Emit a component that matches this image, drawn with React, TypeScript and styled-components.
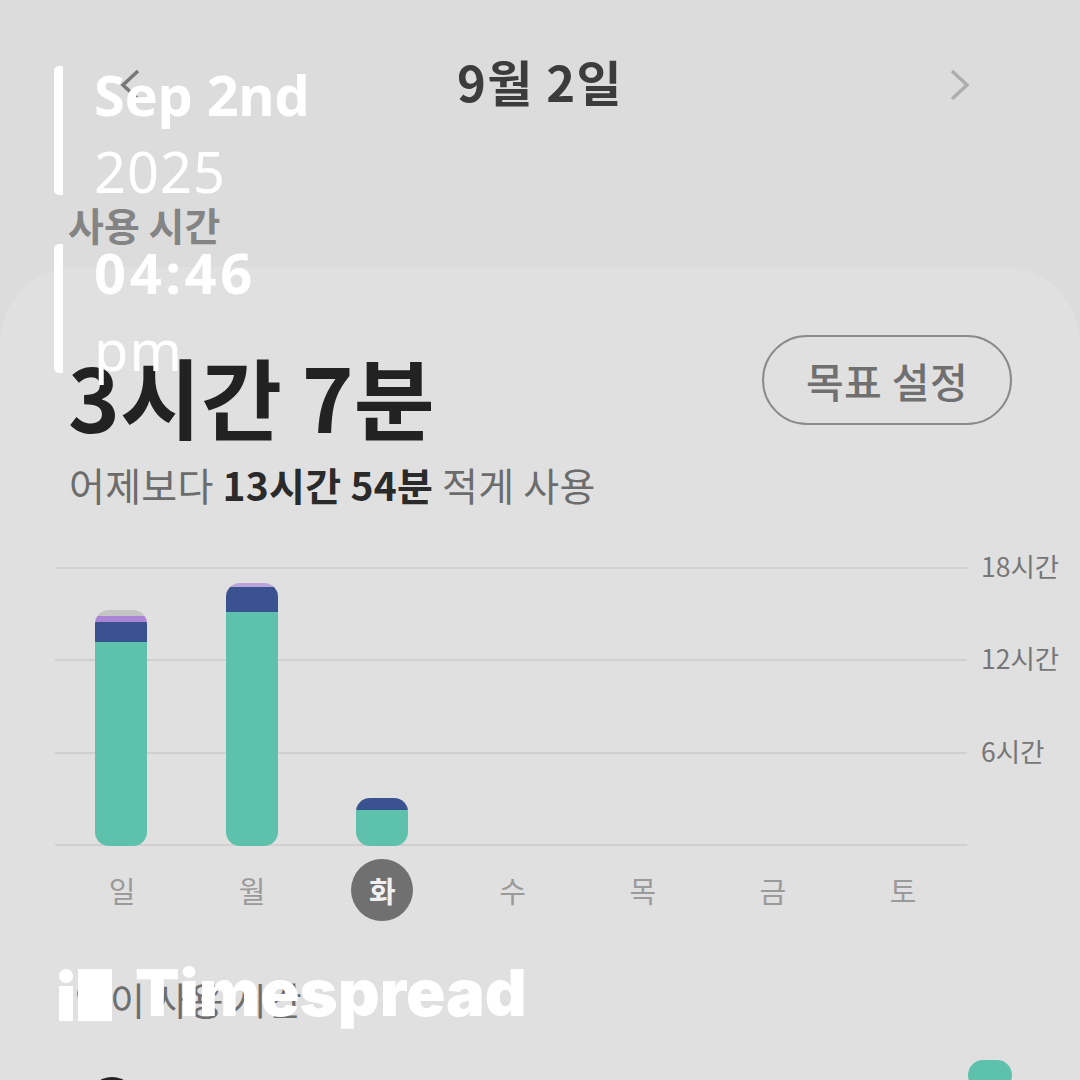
import React from "react";
import styled, { createGlobalStyle } from "styled-components";

const Global = createGlobalStyle`
  html, body { margin: 0; padding: 0; }
  body { background: #dcdcdc; font-family: "Noto Sans CJK KR", "Noto Sans", sans-serif; }
`;

const Page = styled.div`
  position: relative;
  width: 1080px;
  height: 1080px;
  overflow: hidden;
  background: #dcdcdc;
`;

const TopBar = styled.header`
  height: 165px;
  padding: 0 108px;
  display: grid;
  grid-template-columns: 1fr auto 1fr;
  align-items: center;
  box-sizing: border-box;
`;

const ChevronSlot = styled.span<{ $end?: boolean }>`
  display: flex;
  justify-content: ${(p) => (p.$end ? "flex-end" : "flex-start")};
  padding-left: ${(p) => (p.$end ? 0 : 12)}px;
  padding-right: ${(p) => (p.$end ? 2 : 0)}px;
  margin-top: 5px;
`;

const DateTitle = styled.h1`
  margin: -5px 0 0;
  font-size: 49px;
  line-height: 1;
  font-weight: 700;
  letter-spacing: 1.4px;
  color: #3c3c3c;
`;

const Section = styled.h2`
  margin: 0;
  padding-left: 68px;
  height: 102px;
  font-size: 39px;
  line-height: 118px;
  font-weight: 700;
  color: #848484;
`;

const Card = styled.main`
  height: 813px;
  background: #e0e0e0;
  border-radius: 76px 76px 0 0;
  padding: 68px 68px 0;
  box-sizing: border-box;
`;

const SummaryRow = styled.div`
  display: flex;
  justify-content: space-between;
  align-items: flex-start;
`;

const Total = styled.div`
  font-size: 88px;
  line-height: 120px;
  height: 124px;
  font-weight: 700;
  color: #222;
`;

const GoalButton = styled.button`
  width: 250px;
  height: 90px;
  border: 2px solid #8a8a8a;
  border-radius: 45px;
  background: transparent;
  font: 500 41px "Noto Sans CJK KR", sans-serif;
  letter-spacing: 0.4px;
  color: #707070;
`;

const Compare = styled.p`
  margin: 0;
  padding-left: 1px;
  font-size: 39px;
  line-height: 50px;
  letter-spacing: 0.25px;
  color: #6c6c6c;
  strong { font-weight: 700; color: #2a2a2a; }
`;

const Chart = styled.div`
  position: relative;
  margin: 58px 0 0 -13px;
  width: 912px;
  height: 279px;
  display: flex;
  flex-direction: column;
  justify-content: space-between;
`;

const GridLine = styled.div`
  position: relative;
  height: 2px;
  background: #d0d0d0;
`;

const AxisLabel = styled.span`
  position: absolute;
  left: 926px;
  top: -18px;
  font-size: 26.5px;
  line-height: 34px;
  color: #777;
  white-space: nowrap;
`;

const Bars = styled.div`
  position: absolute;
  inset: 0 0 0 40px;
  display: flex;
  align-items: flex-end;
  gap: 78.5px;
`;

const Bar = styled.div`
  width: 52px;
  display: flex;
  flex-direction: column;
  border-radius: 14px;
  overflow: hidden;
`;

const Segment = styled.div<{ $c: string }>`
  background: ${(p) => p.$c};
`;

const Days = styled.div`
  margin: 13px 0 0 -13px;
  padding-left: 24px;
  display: flex;
  gap: 44.2px;
`;

const Day = styled.div<{ $active?: boolean }>`
  width: 86px;
  height: 62px;
  display: flex;
  align-items: center;
  justify-content: center;
  font-size: 29px;
  font-weight: ${(p) => (p.$active ? 700 : 400)};
  color: ${(p) => (p.$active ? "#f0f0f0" : "#9a9a9a")};
  position: relative;
  z-index: 0;
  &::before {
    content: "";
    display: ${(p) => (p.$active ? "block" : "none")};
    position: absolute;
    z-index: -1;
    width: 62px;
    height: 62px;
    border-radius: 50%;
    background: #707070;
  }
`;

const ListHead = styled.div`
  margin-top: 50px;
  padding-left: 7px;
  font-size: 38px;
  line-height: 56px;
  color: #6e6e6e;
`;

const ListRow = styled.div`
  margin-top: 6px;
  display: flex;
  justify-content: space-between;
  align-items: flex-start;
  padding-left: 20px;
`;

const AppIcon = styled.div`
  width: 48px;
  height: 48px;
  border-radius: 50%;
  background: #222;
  margin-top: 44px;
`;

const Toggle = styled.div`
  width: 44px;
  height: 30px;
  border-radius: 15px;
  background: #5ec1ac;
  margin-top: 27px;
`;

const Stamp = styled.div<{ $top: number }>`
  position: absolute;
  left: 54px;
  top: ${(p) => p.$top}px;
  border-left: 9px solid #fff;
  border-radius: 5px;
  height: 129px;
  padding: 4px 0 0 31px;
  box-sizing: border-box;
  display: flex;
  flex-direction: column;
  justify-content: center;
  color: #fff;
  font-family: "Noto Sans", sans-serif;
  font-size: 56px;
  line-height: 77px;
`;

const StampTop = styled.span<{ $spread: number }>`
  font-weight: 700;
  letter-spacing: ${(p) => p.$spread}px;
`;

const StampBottom = styled.span`
  font-weight: 400;
  letter-spacing: 1px;
`;

const Brand = styled.div`
  position: absolute;
  left: 59px;
  top: 961px;
  display: flex;
  align-items: center;
  gap: 23px;
  color: #fff;
  font-family: Inter, sans-serif;
  font-weight: 900;
  font-size: 65px;
  line-height: 70px;
  letter-spacing: 0;
`;

const BrandName = styled.span`
  margin-top: -3px;
`;

const Chevron = ({ flip }: { flip?: boolean }) => (
  <svg width="20" height="32" viewBox="0 0 20 32" fill="none" stroke={flip ? "#aeaeae" : "#777"} strokeWidth="3.5">
    <path d={flip ? "M2 2 L17 16 L2 30" : "M18 2 L3 16 L18 30"} />
  </svg>
);

const Logo = () => (
  <svg width="53" height="52" viewBox="0 0 53 52" fill="#fff">
    <circle cx="7" cy="7" r="7" />
    <rect x="0" y="17" width="14" height="35" />
    <rect x="19" y="0" width="34" height="52" />
  </svg>
);

const bars = [
  [["#c4c4c4", 6], ["#ab84d6", 6], ["#3a5290", 20], ["#5ec1ac", 204]],
  [["#b9a3d8", 4], ["#3a5290", 25], ["#5ec1ac", 234]],
  [["#3a5290", 12], ["#5ec1ac", 36]],
] as [string, number][][];

export default function App() {
  return (
    <Page>
      <Global />
      <TopBar>
        <ChevronSlot><Chevron /></ChevronSlot>
        <DateTitle>9월 2일</DateTitle>
        <ChevronSlot $end><Chevron flip /></ChevronSlot>
      </TopBar>
      <Section>사용 시간</Section>
      <Card>
        <SummaryRow>
          <Total>3시간 7분</Total>
          <GoalButton>목표 설정</GoalButton>
        </SummaryRow>
        <Compare>
          어제보다 <strong>13시간 54분</strong> 적게 사용
        </Compare>
        <Chart>
          <GridLine><AxisLabel>18시간</AxisLabel></GridLine>
          <GridLine><AxisLabel>12시간</AxisLabel></GridLine>
          <GridLine><AxisLabel>6시간</AxisLabel></GridLine>
          <GridLine />
          <Bars>
            {bars.map((segments, i) => (
              <Bar key={i}>
                {segments.map(([c, h], j) => (
                  <Segment key={j} $c={c} style={{ height: h }} />
                ))}
              </Bar>
            ))}
          </Bars>
        </Chart>
        <Days>
          {["일", "월", "화", "수", "목", "금", "토"].map((d) => (
            <Day key={d} $active={d === "화"}>{d}</Day>
          ))}
        </Days>
        <ListHead>앱이 사용 시간</ListHead>
        <ListRow>
          <AppIcon />
          <Toggle />
        </ListRow>
      </Card>
      <Stamp $top={66}>
        <StampTop $spread={-0.4}>Sep 2nd</StampTop>
        <StampBottom>2025</StampBottom>
      </Stamp>
      <Stamp $top={244}>
        <StampTop $spread={3.6}>04:46</StampTop>
        <StampBottom>pm</StampBottom>
      </Stamp>
      <Brand>
        <Logo />
        <BrandName>Timespread</BrandName>
      </Brand>
    </Page>
  );
}
